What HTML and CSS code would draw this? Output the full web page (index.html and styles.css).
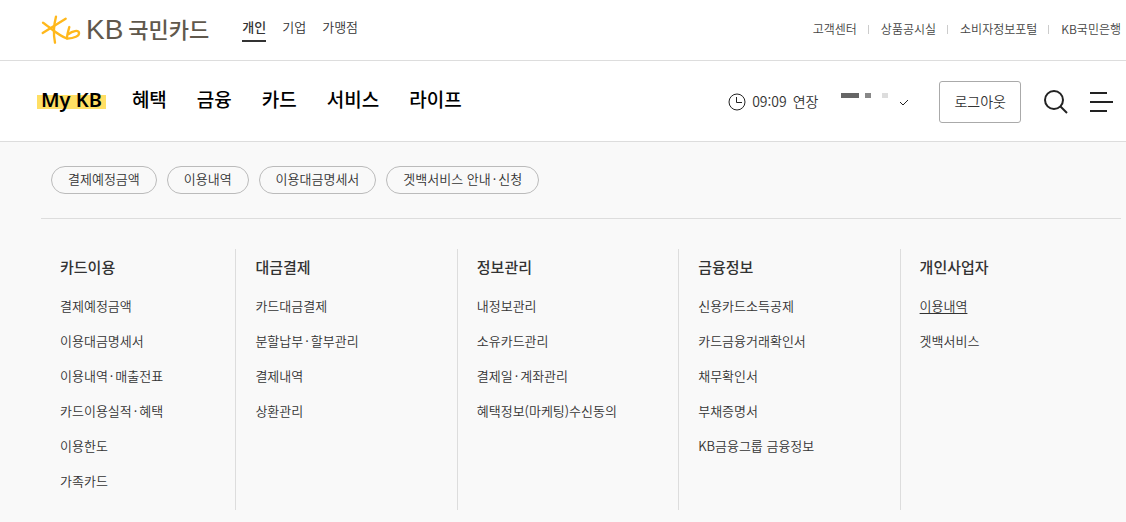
FILE: index.html
```html
<!doctype html>
<html lang="ko">
    <head>
        <meta charset="UTF-8" />
        <meta name="viewport" content="width=device-width, initial-scale=1">
        <title>KB국민카드</title>
        <link rel="stylesheet" href="styles.css">
    </head>
    <body>
        <header>
            <div class="top">
                <a class="logo" href="#home">
                    <svg class="mark" viewBox="33 30 120 90" aria-hidden="true">
                        <path d="M78 35C72 58 70 90 75 113"/>
                        <path d="M38 84L107 41"/>
                        <path d="M39 53C58 65 84 92 112 101C132 100 149 93 147 83C145 74 127 78 116 87"/>
                        <path d="M118 66C114 80 111 90 111 100"/>
                    </svg>
                    <span class="logoEn">KB</span>
                    <span class="logoKr">국민카드</span>
                </a>
                <nav class="sites">
                    <a class="on" href="#personal">개인</a>
                    <a href="#corp">기업</a>
                    <a href="#store">가맹점</a>
                </nav>
                <nav class="util">
                    <a href="#center">고객센터</a>
                    <a href="#notice">상품공시실</a>
                    <a href="#consumer">소비자정보포털</a>
                    <a href="#bank">KB국민은행</a>
                </nav>
            </div>

            <div class="main">
                <nav class="gnb">
                    <a class="my" href="#mykb">My KB</a>
                    <a href="#benefit">혜택</a>
                    <a href="#finance">금융</a>
                    <a href="#card">카드</a>
                    <a href="#service">서비스</a>
                    <a href="#life">라이프</a>
                </nav>
                <div class="tools">
                    <button class="time" type="button">
                        <svg width="18" height="18" viewBox="0 0 18 18" aria-hidden="true">
                            <circle cx="9" cy="9" r="8"/>
                            <path d="M8.5 4v5.5H14"/>
                        </svg>
                        <span>09:09</span>
                        <span>연장</span>
                    </button>
                    <button class="user" type="button" aria-label="사용자 메뉴">
                        <svg width="68" height="20" viewBox="0 0 68 20" aria-hidden="true">
                            <path fill="#666" d="M0 1h18v5H0z"/>
                            <path fill="#888" d="M24 1h6v5h-6z"/>
                            <path fill="#ddd" d="M41 1h6v5h-6z"/>
                            <path class="check" d="M59 10l3 3 5-5"/>
                        </svg>
                    </button>
                    <button class="logout" type="button">로그아웃</button>
                    <button class="search" type="button" aria-label="검색">
                        <svg width="26" height="26" viewBox="0 0 26 26" aria-hidden="true">
                            <circle cx="11" cy="11" r="9"/>
                            <path d="M17 17l7 7"/>
                        </svg>
                    </button>
                    <button class="menu" type="button" aria-label="전체메뉴">
                        <svg width="24" height="20" viewBox="0 0 24 20" aria-hidden="true">
                            <path d="M0 1h17M0 10h23M0 19h17"/>
                        </svg>
                    </button>
                </div>
            </div>
        </header>

        <main class="panel">
            <div class="quick">
                <a href="#q1">결제예정금액</a>
                <a href="#q2">이용내역</a>
                <a href="#q3">이용대금명세서</a>
                <a href="#q4">겟백서비스 안내<span class="dot">·</span>신청</a>
            </div>

            <div class="cols">
                <section>
                    <h2>카드이용</h2>
                    <ul>
                        <li><a href="#a1">결제예정금액</a></li>
                        <li><a href="#a2">이용대금명세서</a></li>
                        <li><a href="#a3">이용내역<span class="dot">·</span>매출전표</a></li>
                        <li><a href="#a4">카드이용실적<span class="dot">·</span>혜택</a></li>
                        <li><a href="#a5">이용한도</a></li>
                        <li><a href="#a6">가족카드</a></li>
                    </ul>
                </section>
                <section>
                    <h2>대금결제</h2>
                    <ul>
                        <li><a href="#b1">카드대금결제</a></li>
                        <li><a href="#b2">분할납부<span class="dot">·</span>할부관리</a></li>
                        <li><a href="#b3">결제내역</a></li>
                        <li><a href="#b4">상환관리</a></li>
                    </ul>
                </section>
                <section>
                    <h2>정보관리</h2>
                    <ul>
                        <li><a href="#c1">내정보관리</a></li>
                        <li><a href="#c2">소유카드관리</a></li>
                        <li><a href="#c3">결제일<span class="dot">·</span>계좌관리</a></li>
                        <li><a href="#c4">혜택정보(마케팅)수신동의</a></li>
                    </ul>
                </section>
                <section>
                    <h2>금융정보</h2>
                    <ul>
                        <li><a href="#d1">신용카드소득공제</a></li>
                        <li><a href="#d2">카드금융거래확인서</a></li>
                        <li><a href="#d3">채무확인서</a></li>
                        <li><a href="#d4">부채증명서</a></li>
                        <li><a href="#d5">KB금융그룹 금융정보</a></li>
                    </ul>
                </section>
                <section>
                    <h2>개인사업자</h2>
                    <ul>
                        <li><a class="current" href="#e1">이용내역</a></li>
                        <li><a href="#e2">겟백서비스</a></li>
                    </ul>
                </section>
            </div>
        </main>
    </body>
</html>
```

FILE: styles.css
```css
* {
    box-sizing: border-box;
}

body {
    margin: 0;
    background-color: #fff;
    color: #333;
    font-family: "Noto Sans CJK KR", sans-serif;
    font-size: 13px;
    line-height: 20px;
    font-weight: 350;
    display: flex;
    flex-direction: column;
    min-height: 100vh;
}

a {
    color: inherit;
    text-decoration: none;
    white-space: nowrap;
}

button {
    background: none;
    border: 0;
    padding: 0;
    color: inherit;
    font: inherit;
    cursor: pointer;
}

svg {
    display: block;
    fill: none;
}

.dot {
    margin: 0 2px;
}

/* top bar */
.top {
    display: flex;
    align-items: center;
    padding: 0 5px 0 41px;
    height: 61px;
    border-bottom: 1px solid #ddd;
}

.logo {
    display: flex;
    align-items: center;
    color: #60584c;
    font-weight: 400;
}

.mark {
    width: 40px;
    height: 30px;
    stroke: #ffb81c;
    stroke-width: 7;
    stroke-linecap: round;
    stroke-linejoin: round;
}

.logoEn {
    margin-left: 5px;
    font-family: "Liberation Sans", sans-serif;
    font-size: 28px;
}

.logoKr {
    margin-left: 5px;
    padding-bottom: 5px;
    font-size: 22px;
    font-weight: 500;
}

.sites {
    display: flex;
    gap: 16px;
    margin-left: 33px;
}

.sites a {
    padding-bottom: 4px;
    border-bottom: 2px solid transparent;
    line-height: 18px;
}

.sites .on {
    font-weight: 500;
    border-color: #333;
}

.util {
    display: flex;
    align-items: center;
    margin-left: auto;
    padding-bottom: 2px;
    font-size: 12px;
    color: #444;
}

.util a {
    display: flex;
    align-items: center;
}

.util a + a::before {
    content: "";
    width: 1px;
    height: 9px;
    margin: 0 12px 0 11px;
    background-color: #ccc;
}

/* main menu */
.main {
    display: flex;
    align-items: center;
    justify-content: space-between;
    padding: 0 12px 0 37px;
    height: 81px;
    border-bottom: 1px solid #ddd;
}

.gnb {
    display: flex;
    align-items: center;
    gap: 30px;
    padding-bottom: 5px;
    font-size: 19px;
    font-weight: 500;
    color: #000;
}

.gnb .my {
    margin-right: -4px;
    padding: 2px 4px 0;
    font-family: "Noto Sans", sans-serif;
    font-size: 20px;
    font-weight: 600;
    background: linear-gradient(#ffdf64, #ffdf64) 0 7px / 100% 14px no-repeat;
}

.tools {
    display: flex;
    align-items: center;
    padding-top: 2px;
}

.time {
    display: flex;
    align-items: center;
    gap: 6px;
    font-size: 14px;
}

.time span {
    padding-bottom: 2px;
}

.time svg, .check {
    stroke: #222;
    stroke-width: 1;
}

.user {
    margin-left: 23px;
}

.logout {
    margin-left: 30px;
    padding: 9px 14px 11px;
    border: 1px solid #aaa;
    border-radius: 3px;
    font-size: 14px;
}

.search {
    margin-left: 22px;
}

.menu {
    margin-left: 21px;
}

.search svg, .menu svg {
    stroke: #222;
    stroke-width: 2;
}

/* opened menu */
.panel {
    flex: 1;
    padding: 24px 5px 12px 41px;
    background-color: #f9f9f9;
}

.quick {
    display: flex;
    gap: 10px;
    padding: 0 10px 24px;
    border-bottom: 1px solid #ddd;
}

.quick a {
    padding: 2px 16px 4px;
    border: 1px solid #bbb;
    border-radius: 14px;
}

.cols {
    display: grid;
    grid-template-columns: 18% repeat(4, 1fr);
    margin-top: 30px;
}

section {
    min-height: 261px;
    padding: 8px 0 0 19px;
}

section + section {
    border-left: 1px solid #ddd;
}

h2 {
    margin: 0 0 11px;
    font-size: 15px;
    font-weight: 500;
    line-height: 20px;
}

ul {
    margin: 0;
    padding: 0;
    list-style: none;
}

li {
    line-height: 35px;
}

.current {
    text-decoration: underline;
    text-underline-offset: 2px;
}
```
